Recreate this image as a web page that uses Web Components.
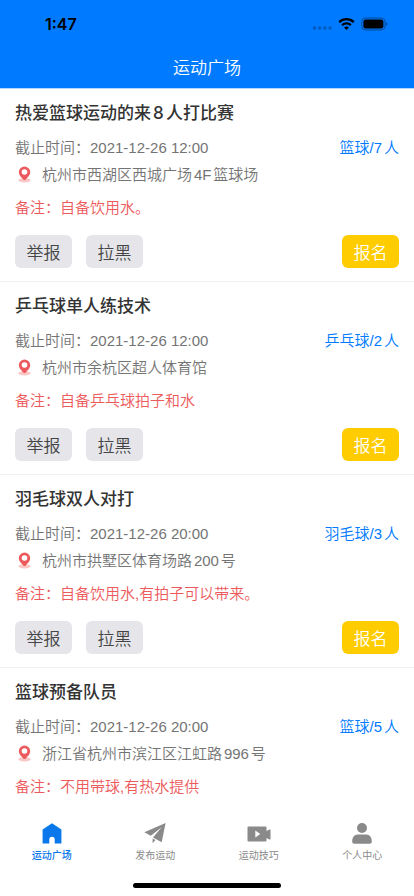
<!DOCTYPE html>
<html lang="zh-CN">
<head>
<meta charset="utf-8">
<meta name="viewport" content="width=device-width, initial-scale=1">
<title>运动广场</title>
<style>
  body {
    margin: 0;
    font-family: Inter, "Noto Sans CJK SC", sans-serif;
    text-autospace: normal;
    background-color: #fff;
  }
</style>
</head>
<body>
<sport-app>
  <status-bar slot="header"></status-bar>
  <nav-header slot="header">运动广场</nav-header>

  <sport-card time="2021-12-26 12:00" sport="篮球" people="7">
    热爱篮球运动的来8人打比赛
    <span slot="address">杭州市西湖区西城广场4F篮球场</span>
    <span slot="remark">自备饮用水。</span>
  </sport-card>
  <sport-card time="2021-12-26 12:00" sport="乒乓球" people="2">
    乒乓球单人练技术
    <span slot="address">杭州市余杭区超人体育馆</span>
    <span slot="remark">自备乒乓球拍子和水</span>
  </sport-card>
  <sport-card time="2021-12-26 20:00" sport="羽毛球" people="3">
    羽毛球双人对打
    <span slot="address">杭州市拱墅区体育场路200号</span>
    <span slot="remark">自备饮用水,有拍子可以带来。</span>
  </sport-card>
  <sport-card time="2021-12-26 20:00" sport="篮球" people="5">
    篮球预备队员
    <span slot="address">浙江省杭州市滨江区江虹路996号</span>
    <span slot="remark">不用带球,有热水提供</span>
  </sport-card>

  <tab-bar slot="footer">
    <tab-item icon="home" active>运动广场</tab-item>
    <tab-item icon="send">发布运动</tab-item>
    <tab-item icon="video">运动技巧</tab-item>
    <tab-item icon="user">个人中心</tab-item>
  </tab-bar>
</sport-app>

<script>
class SportApp extends HTMLElement {
  constructor() {
    super();
    this.attachShadow({ mode: 'open' });
  }

  connectedCallback() {
    this.shadowRoot.innerHTML = `
      <style>
        :host {
          display: flex;
          flex-direction: column;
          height: 100vh;
        }
        header {
          background-color: #007aff;
          border-bottom: 1px solid #b3d7ff;
        }
        main {
          flex: 1;
          min-height: 0;
          overflow-y: auto;
          scrollbar-width: none;
        }
      </style>
      <header><slot name="header"></slot></header>
      <main><slot></slot></main>
      <slot name="footer"></slot>
    `;
  }
}

class StatusBar extends HTMLElement {
  constructor() {
    super();
    this.attachShadow({ mode: 'open' });
  }

  connectedCallback() {
    this.shadowRoot.innerHTML = `
      <style>
        :host {
          display: flex;
          align-items: center;
          justify-content: space-between;
          height: 48px;
          padding: 0 26px 0 45px;
          box-sizing: border-box;
          color: #000;
          font-size: 16px;
          font-weight: 600;
        }
        .icons {
          display: flex;
          align-items: center;
          gap: 6px;
        }
        svg {
          display: block;
        }
      </style>
      <span>1:47</span>
      <div class="icons">
        <svg width="20" height="14" viewBox="0 0 20 14" fill="#000" fill-opacity="0.25">
          <circle cx="2.5" cy="11" r="1.8"/>
          <circle cx="7.7" cy="11" r="1.8"/>
          <circle cx="12.9" cy="11" r="1.8"/>
          <circle cx="18.1" cy="11" r="1.8"/>
        </svg>
        <svg width="17" height="14" viewBox="0 0 17 14" fill="none" stroke="#000" stroke-width="2.2">
          <path d="M1.2 5.1a10.4 10.4 0 0 1 14.6 0"/>
          <path d="M4.1 8.1a6.3 6.3 0 0 1 8.8 0"/>
          <path d="M8.5 13L6.1 10.6a3.5 3.5 0 0 1 4.8 0z" fill="#000" stroke="none"/>
        </svg>
        <svg width="27" height="14" viewBox="0 0 27 14">
          <rect x="0.8" y="1" width="23.2" height="12" rx="3.6" fill="none" stroke="#000" stroke-opacity="0.4"/>
          <rect x="2.4" y="2.6" width="20" height="8.8" rx="2.2"/>
          <path d="M25.2 5v4c1.6-.6 1.6-3.4 0-4z" fill-opacity="0.45"/>
        </svg>
      </div>
    `;
  }
}

class NavHeader extends HTMLElement {
  constructor() {
    super();
    this.attachShadow({ mode: 'open' });
  }

  connectedCallback() {
    this.shadowRoot.innerHTML = `
      <style>
        :host {
          display: block;
        }
        h1 {
          margin: 0;
          color: #fff;
          font-size: 17px;
          font-weight: 350;
          line-height: 40px;
          text-align: center;
        }
      </style>
      <h1><slot></slot></h1>
    `;
  }
}

class SportCard extends HTMLElement {
  constructor() {
    super();
    this.attachShadow({ mode: 'open' });
  }

  connectedCallback() {
    const time = this.getAttribute('time');
    const sport = this.getAttribute('sport');
    const people = this.getAttribute('people');

    this.shadowRoot.innerHTML = `
      <style>
        :host {
          display: block;
          padding: 12px 15px 13px;
          border-bottom: 1px solid #f2f2f3;
          color: #747474;
          font-family: "Liberation Sans", "Noto Sans CJK SC", sans-serif;
          font-size: 15px;
          font-weight: 350;
          line-height: 27px;
        }
        h2 {
          margin: 0 0 9px;
          color: #333;
          font-family: Inter, "Noto Sans CJK SC", sans-serif;
          font-size: 17px;
          font-weight: 500;
          line-height: 24px;
        }
        p {
          margin: 0;
        }
        .row {
          display: flex;
          justify-content: space-between;
        }
        .sport {
          color: #007aff;
        }
        .address {
          display: flex;
          align-items: center;
          gap: 8px;
        }
        .remark {
          margin: 6px 0 14px;
          color: #ec5a5c;
        }
        ::slotted([slot="remark"]) {
          text-autospace: no-autospace;
        }
        .group {
          display: flex;
          gap: 14px;
        }
        button {
          width: 57px;
          height: 33px;
          padding: 0;
          border: none;
          border-radius: 6px;
          background-color: #e5e5ea;
          color: #444;
          font-family: inherit;
          font-size: 17px;
          font-weight: 350;
        }
        .join {
          background-color: #ffcc00;
          color: #fff;
        }
      </style>
      <h2><slot></slot></h2>
      <div class="row">
        <span>截止时间：${time}</span>
        <span class="sport">${sport}/${people}人</span>
      </div>
      <div class="address">
        <svg width="19" height="19" viewBox="0 0 19 19">
          <ellipse cx="9.5" cy="15.2" rx="6.2" ry="2.2" fill="#fbc6c6"/>
          <path d="M9.5 1.6a5.7 5.7 0 0 0-5.7 5.7c0 3 2.6 5.1 4.5 7.1a1.7 1.7 0 0 0 2.4 0c1.9-2 4.5-4.1 4.5-7.1a5.7 5.7 0 0 0-5.7-5.7z" fill="#ec5a5e"/>
          <circle cx="9.5" cy="7" r="2.8" fill="#fff"/>
        </svg>
        <slot name="address"></slot>
      </div>
      <p class="remark">备注：<slot name="remark"></slot></p>
      <div class="row">
        <div class="group">
          <button type="button">举报</button>
          <button type="button">拉黑</button>
        </div>
        <button type="button" class="join">报名</button>
      </div>
    `;
  }
}

class TabBar extends HTMLElement {
  constructor() {
    super();
    this.attachShadow({ mode: 'open' });
  }

  connectedCallback() {
    this.shadowRoot.innerHTML = `
      <style>
        :host {
          display: block;
          padding-bottom: 8px;
          background-color: #fff;
        }
        nav {
          display: flex;
          height: 71px;
        }
        .indicator {
          width: 148px;
          height: 5px;
          margin: 0 auto;
          border-radius: 3px;
          background-color: #000;
        }
      </style>
      <nav><slot></slot></nav>
      <div class="indicator"></div>
    `;
  }
}

const icons = {
  home: '<path d="M12 1.2L2.6 7.4V21.5H9.3V17.5a2.7 2.7 0 0 1 5.4 0V21.5H21.4V7.4z"/>',
  send: '<path d="M22.6 1L1.3 10.2L7.8 13.8L18.6 5.2L10 15.4L18.7 20.2zM9.6 16.5V21.2L12.4 18z"/>',
  video: '<path fill-rule="evenodd" d="M1.5 4.5h17a1 1 0 0 1 1 1V9l3-1.5h1v10h-1l-3-1.5v2.5a1 1 0 0 1-1 1h-17a1 1 0 0 1-1-1v-13a1 1 0 0 1 1-1zM8.3 8.5v7l5-3.5z"/>',
  user: '<circle cx="12" cy="6" r="5"/><path d="M2.2 19.5c0-4 2-7 5.5-7h8.6c3.5 0 5.5 3 5.5 7 0 1.4-.7 2.2-2 2.2H4.200c-1.300 0-2-.8-2-2.200z"/>'
};

class TabItem extends HTMLElement {
  constructor() {
    super();
    this.attachShadow({ mode: 'open' });
  }

  connectedCallback() {
    this.shadowRoot.innerHTML = `
      <style>
        :host {
          flex: 1;
          color: #8a8a8a;
          font-size: 10px;
          line-height: 16px;
        }
        :host([active]) {
          color: #0a78eb;
          font-weight: 500;
        }
        a {
          display: flex;
          flex-direction: column;
          align-items: center;
          padding-top: 10px;
          color: inherit;
          text-decoration: none;
        }
        svg {
          display: block;
          margin-bottom: 1px;
          fill: currentColor;
        }
      </style>
      <a href="#${this.getAttribute('icon')}">
        <svg width="24" height="24" viewBox="0 0 24 24">${icons[this.getAttribute('icon')]}</svg>
        <slot></slot>
      </a>
    `;
  }
}

customElements.define('sport-app', SportApp);
customElements.define('status-bar', StatusBar);
customElements.define('nav-header', NavHeader);
customElements.define('sport-card', SportCard);
customElements.define('tab-bar', TabBar);
customElements.define('tab-item', TabItem);
</script>
</body>
</html>
